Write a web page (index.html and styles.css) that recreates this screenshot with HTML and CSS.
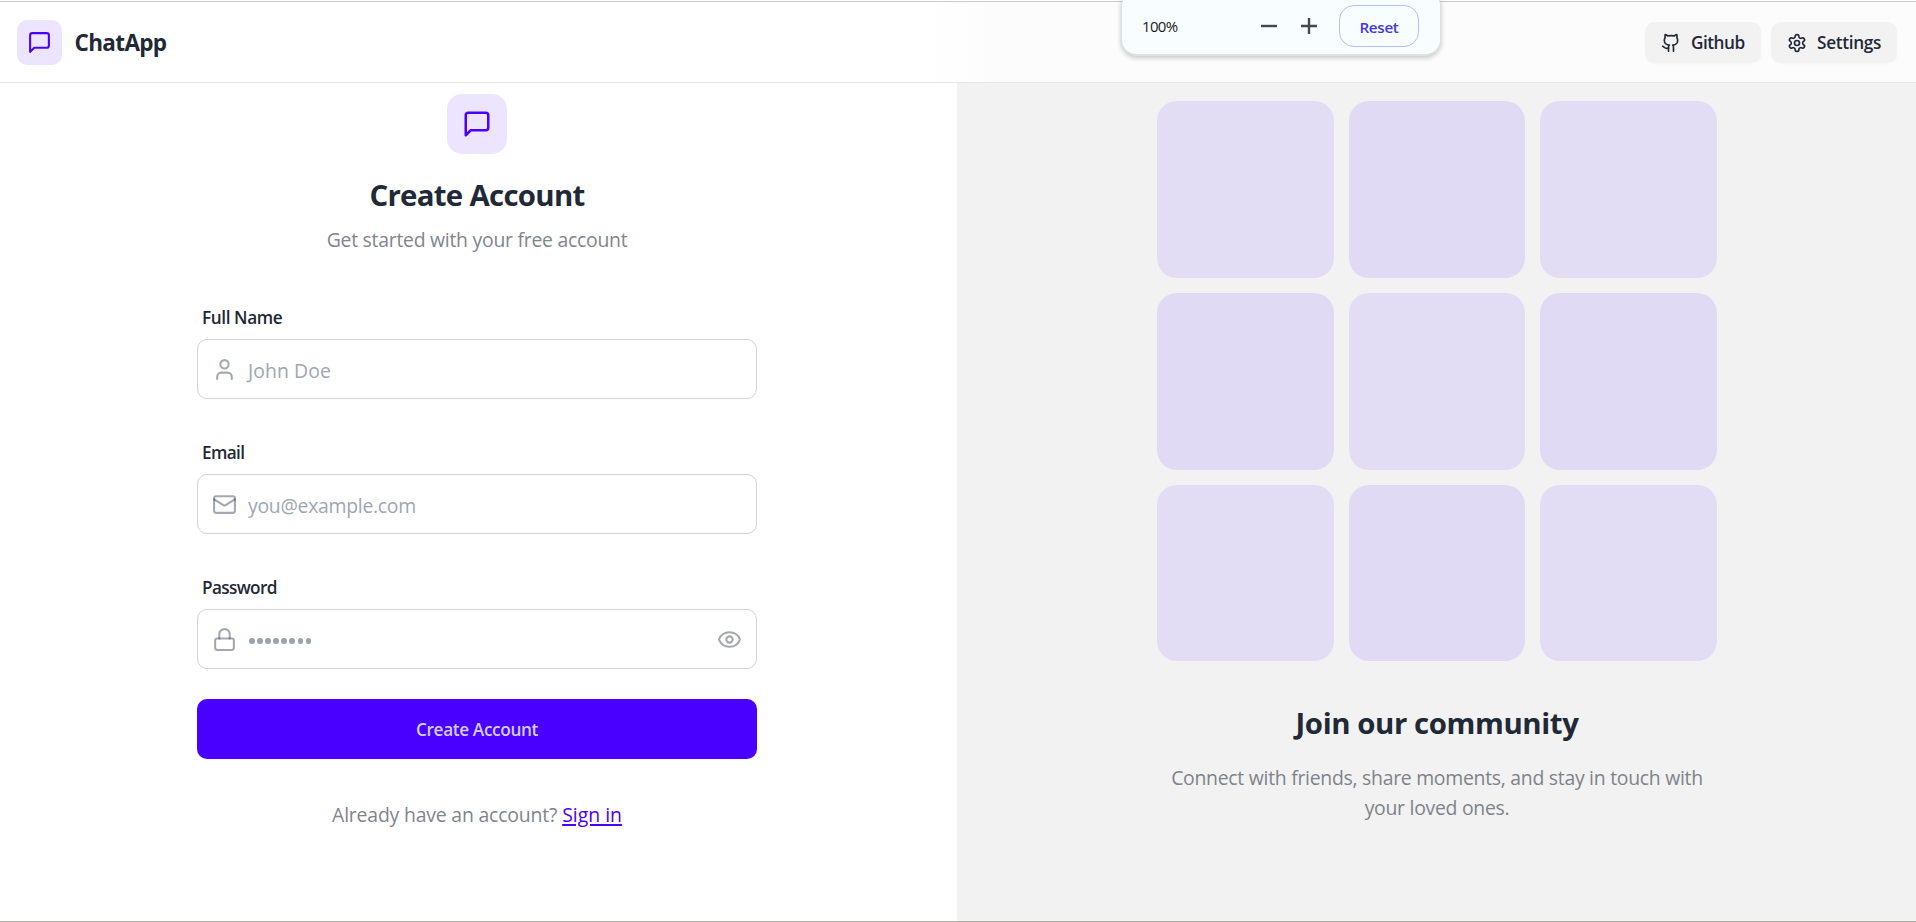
FILE: index.html
```html
<!DOCTYPE html>
<html lang="en">
<head>
<meta charset="utf-8">
<title>ChatApp</title>
<link rel="stylesheet" href="styles.css">
</head>
<body>
<div class="page">
  <header class="navbar">
    <div class="brand">
      <div class="brand-icon"><svg class="icon icon-25" viewBox="0 0 24 24"><path d="M21 15a2 2 0 0 1-2 2H7l-4 4V5a2 2 0 0 1 2-2h14a2 2 0 0 1 2 2z"/></svg></div>
      <span class="brand-name">ChatApp</span>
    </div>
    <nav class="nav-actions">
      <a class="nav-btn nav-github"><svg class="icon icon-20" viewBox="0 0 24 24"><path d="M15 22v-4a4.8 4.8 0 0 0-1-3.5c3 0 6-2 6-5.5.08-1.25-.27-2.48-1-3.5.28-1.15.28-2.35 0-3.5 0 0-1 0-3 1.5-2.64-.5-5.36-.5-8 0C6 2 5 2 5 2c-.3 1.15-.3 2.35 0 3.5A5.403 5.403 0 0 0 4 9c0 3.5 3 5.5 6 5.5-.39.49-.68 1.05-.85 1.65-.17.6-.22 1.23-.15 1.85v4"/><path d="M9 18c-4.51 2-5-2-7-2"/></svg><span>Github</span></a>
      <a class="nav-btn nav-settings"><svg class="icon icon-20" viewBox="0 0 24 24"><path d="M12.22 2h-.44a2 2 0 0 0-2 2v.18a2 2 0 0 1-1 1.73l-.43.25a2 2 0 0 1-2 0l-.15-.08a2 2 0 0 0-2.73.73l-.22.38a2 2 0 0 0 .73 2.73l.15.1a2 2 0 0 1 1 1.72v.51a2 2 0 0 1-1 1.74l-.15.09a2 2 0 0 0-.73 2.73l.22.38a2 2 0 0 0 2.73.73l.15-.08a2 2 0 0 1 2 0l.43.25a2 2 0 0 1 1 1.73V20a2 2 0 0 0 2 2h.44a2 2 0 0 0 2-2v-.18a2 2 0 0 1 1-1.73l.43-.25a2 2 0 0 1 2 0l.15.08a2 2 0 0 0 2.73-.73l.22-.39a2 2 0 0 0-.73-2.73l-.15-.08a2 2 0 0 1-1-1.74v-.5a2 2 0 0 1 1-1.74l.15-.09a2 2 0 0 0 .73-2.73l-.22-.38a2 2 0 0 0-2.73-.73l-.15.08a2 2 0 0 1-2 0l-.43-.25a2 2 0 0 1-1-1.73V4a2 2 0 0 0-2-2z"/><circle cx="12" cy="12" r="3"/></svg><span>Settings</span></a>
    </nav>
  </header>

  <main class="split">
    <section class="signup">
      <div class="intro">
        <div class="intro-icon"><svg class="icon icon-30" viewBox="0 0 24 24"><path d="M21 15a2 2 0 0 1-2 2H7l-4 4V5a2 2 0 0 1 2-2h14a2 2 0 0 1 2 2z"/></svg></div>
        <h1 class="title">Create Account</h1>
        <p class="subtitle">Get started with your free account</p>
      </div>
      <form class="form">
        <div class="field">
          <span class="label label-name">Full Name</span>
          <div class="input"><svg class="icon icon-25 muted" viewBox="0 0 24 24"><path d="M19 21v-2a4 4 0 0 0-4-4H9a4 4 0 0 0-4 4v2"/><circle cx="12" cy="7" r="4"/></svg><span class="hint hint-name">John Doe</span></div>
        </div>
        <div class="field">
          <span class="label">Email</span>
          <div class="input"><svg class="icon icon-25 muted" viewBox="0 0 24 24"><rect width="20" height="16" x="2" y="4" rx="2"/><path d="m22 7-8.97 5.7a1.94 1.94 0 0 1-2.06 0L2 7"/></svg><span class="hint">you@example.com</span></div>
        </div>
        <div class="field">
          <span class="label">Password</span>
          <div class="input"><svg class="icon icon-25 muted" viewBox="0 0 24 24"><rect width="18" height="11" x="3" y="11" rx="2" ry="2"/><path d="M7 11V7a5 5 0 0 1 10 0v4"/></svg><span class="dots"><i></i><i></i><i></i><i></i><i></i><i></i><i></i><i></i></span><svg class="icon icon-25 muted eye" viewBox="0 0 24 24"><path d="M2.062 12.348a1 1 0 0 1 0-.696 10.75 10.75 0 0 1 19.876 0 1 1 0 0 1 0 .696 10.75 10.75 0 0 1-19.876 0"/><circle cx="12" cy="12" r="3"/></svg></div>
        </div>
        <div class="submit">Create Account</div>
      </form>
      <p class="signin"><span>Already have an account?</span><a class="link">Sign in</a></p>
    </section>

    <section class="community">
      <div class="tiles">
        <div class="tile"></div><div class="tile deep"></div><div class="tile"></div>
        <div class="tile deep"></div><div class="tile"></div><div class="tile deep"></div>
        <div class="tile"></div><div class="tile deep"></div><div class="tile"></div>
      </div>
      <h2 class="join">Join our community</h2>
      <p class="blurb">Connect with friends, share moments, and stay in touch with<br>your loved ones.</p>
    </section>
  </main>
</div>

<div class="zoom-bubble">
  <span class="zoom-level">100%</span>
  <svg class="zoom-sign" viewBox="0 0 16 16"><path d="M0 8h16"/></svg>
  <svg class="zoom-sign" viewBox="0 0 16 16"><path d="M0 8h16M8 0v16"/></svg>
  <span class="zoom-reset">Reset</span>
</div>
</body>
</html>
```

FILE: styles.css
```css
* { box-sizing: border-box; }
body { margin: 0; font-family: "Open Sans", "Noto Sans", sans-serif; color: #1f2937; background: #fff; overflow: hidden; }
h1, h2, p { margin: 0; }

.page { width: 1916px; height: 922px; padding-top: 1px; display: flex; flex-direction: column; border-bottom: 1px solid #b9b2ab; }

.icon { display: block; flex: none; fill: none; stroke: currentColor; stroke-width: 2; stroke-linecap: round; stroke-linejoin: round; }
.icon-20 { width: 20px; height: 20px; }
.icon-25 { width: 25px; height: 25px; }
.icon-30 { width: 30px; height: 30px; }
.muted { color: rgba(31, 41, 55, 0.4); }

/* Top bar */
.navbar { height: 82px; flex: none; padding: 0 19px 0 17px; display: flex; align-items: center; justify-content: space-between; border-top: 1px solid #c9c9c9; border-bottom: 1px solid #e5e5e5; background: linear-gradient(90deg, #fff 925px, #fcfcfc 1000px); }
.brand { display: flex; align-items: center; gap: 12.5px; }
.brand-icon { width: 45px; height: 45px; border-radius: 10px; background: #ede5ff; color: #4a00ff; display: flex; align-items: center; justify-content: center; }
.brand-name { font-size: 22.5px; line-height: 35px; font-weight: 700; letter-spacing: -0.65px; }
.nav-actions { display: flex; gap: 10px; padding-top: 1px; }
.nav-btn { height: 41px; display: flex; align-items: center; gap: 10px; padding-left: 16px; border-radius: 10px; background: #f2f2f2; box-shadow: 0 1px 2px rgba(0, 0, 0, 0.03); font-size: 17.2px; font-weight: 600; line-height: 24px; white-space: nowrap; }
.nav-github { width: 116px; letter-spacing: -0.5px; }
.nav-settings { width: 126px; letter-spacing: -0.32px; }

/* Two-column body */
.split { flex: 1; display: grid; grid-template-columns: 957px 1fr; }
.signup { padding: 11px 200px 0 197px; }
.intro { display: flex; flex-direction: column; align-items: center; }
.intro-icon { width: 60px; height: 60px; border-radius: 15px; background: #ede5ff; color: #4a00ff; display: flex; align-items: center; justify-content: center; }
.title { margin-top: 21px; font-size: 29.4px; line-height: 40px; font-weight: 700; letter-spacing: -0.7px; }
.subtitle { margin-top: 10px; font-size: 19.4px; line-height: 30px; letter-spacing: -0.26px; color: #7f858d; }

.form { margin-top: 39px; display: flex; flex-direction: column; gap: 30px; }
.field { height: 105px; display: flex; flex-direction: column; justify-content: space-between; }
.label { padding: 11px 5px 0; font-size: 17.2px; line-height: 25px; font-weight: 600; letter-spacing: -0.65px; }
.label-name { letter-spacing: -0.4px; }
.input { height: 60px; padding: 0 14px; display: flex; align-items: center; border: 1px solid #d2d3d6; border-radius: 10px; background: #fff; }
.hint { margin: 3px 0 0 11px; font-size: 19.4px; line-height: 30px; letter-spacing: -0.28px; color: #a0a6b2; }
.hint-name { letter-spacing: 0.08px; }
.dots { margin: 4px 0 0 12px; display: flex; gap: 2.6px; }
.dots i { width: 5.5px; height: 5.5px; border-radius: 50%; background: #9ca3af; }
.eye { margin-left: auto; }
.submit { height: 60px; border-radius: 10px; background: #4a00ff; color: #d2cdff; display: flex; align-items: center; justify-content: center; font-size: 17.3px; font-weight: 600; letter-spacing: -0.4px; box-shadow: 0 1px 2px rgba(0, 0, 0, 0.05); }
.signin { margin-top: 41px; display: flex; justify-content: center; gap: 5px; font-size: 19.4px; line-height: 30px; letter-spacing: -0.18px; color: #7f858d; }
.link { color: #4a00ff; letter-spacing: 0; text-decoration: underline; text-decoration-thickness: 2px; text-underline-offset: 2px; }

.community { padding: 18.4px 199px 0 200px; background: #f2f2f2; text-align: center; }
.tiles { display: grid; grid-template-columns: repeat(3, 1fr); gap: 15px; }
.tile { aspect-ratio: 1; border-radius: 20px; background: #e2ddf4; }
.deep { background: #e0daf4; }
.join { margin-top: 41.6px; font-size: 29.4px; line-height: 40px; font-weight: 700; letter-spacing: -0.42px; }
.blurb { margin-top: 20px; font-size: 19.4px; line-height: 30px; letter-spacing: -0.27px; color: #7e838b; }

/* Browser zoom bubble floating over the page */
.zoom-bubble { position: absolute; left: 1121px; top: -10px; width: 320px; height: 66px; padding: 14px 21px 0 20px; display: flex; align-items: flex-start; border: 1px solid #dae2e5; border-bottom-width: 2px; border-radius: 16px; background: #f8fdff; box-shadow: 0 2px 5px rgba(0, 0, 0, 0.22); }
.zoom-level { width: 119px; margin-top: 10px; font-size: 15px; line-height: 22px; letter-spacing: -0.65px; color: #1b1b1b; }
.zoom-sign { width: 16px; height: 16px; margin: 13px 24px 0 0; fill: none; stroke: #44474b; stroke-width: 2.4; overflow: visible; }
.zoom-reset { width: 80px; height: 42px; margin-left: -2px; flex: none; border: 1px solid #b9bdf8; border-radius: 15px; color: #4339dc; font-size: 15.2px; font-weight: 600; letter-spacing: -0.3px; line-height: 43px; text-align: center; }
```
